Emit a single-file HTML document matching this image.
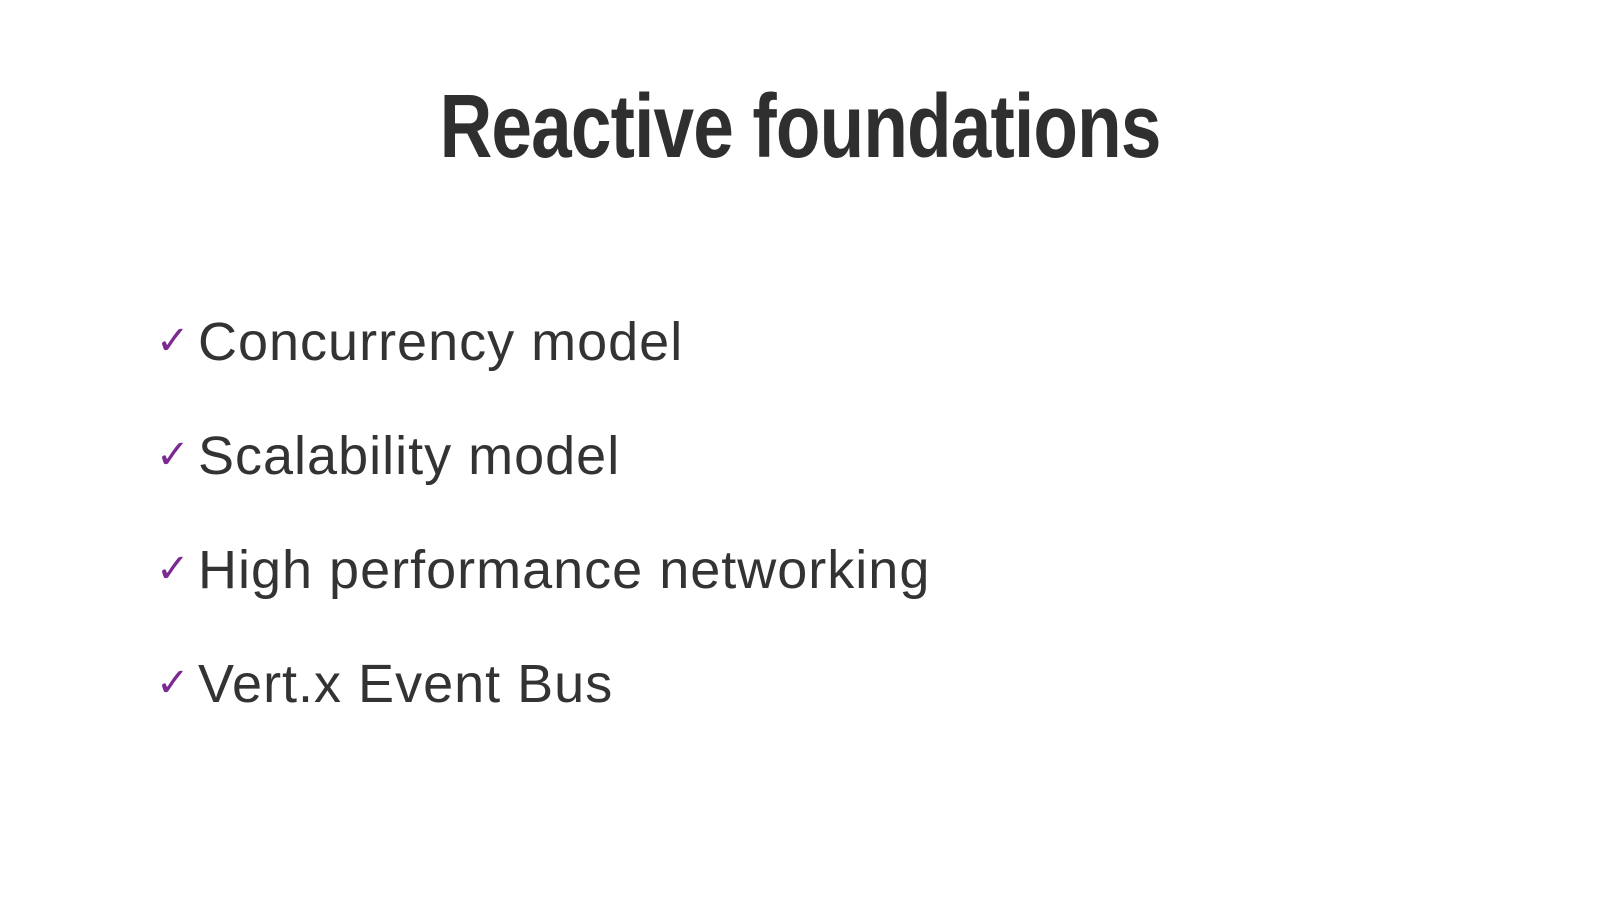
<!DOCTYPE html>
<html><head><meta charset="utf-8"><style>
html,body{margin:0;padding:0;background:#fff;}
body{width:1600px;height:900px;position:relative;overflow:hidden;font-family:"Liberation Sans",sans-serif;color:#333;}
.title{position:absolute;top:72px;left:0;width:1600px;text-align:center;}
.title span{display:inline-block;font-weight:bold;font-size:90px;line-height:110px;transform:scaleX(0.81);transform-origin:center;letter-spacing:-1px;color:#2f2f2f;margin-left:0;}
.item{position:absolute;left:156px;font-size:54px;line-height:60px;color:#333;white-space:nowrap;letter-spacing:1px;}
.item .c{color:#7b2a8f;font-size:40px;display:inline-block;width:42px;vertical-align:6px;letter-spacing:0;}
</style></head><body>
<div class="title"><span>Reactive foundations</span></div>
<div class="item" style="top:311px"><span class="c">✓</span>Concurrency model</div>
<div class="item" style="top:425px"><span class="c">✓</span>Scalability model</div>
<div class="item" style="top:539px"><span class="c">✓</span>High performance networking</div>
<div class="item" style="top:653px"><span class="c">✓</span>Vert.x Event Bus</div>
</body></html>
